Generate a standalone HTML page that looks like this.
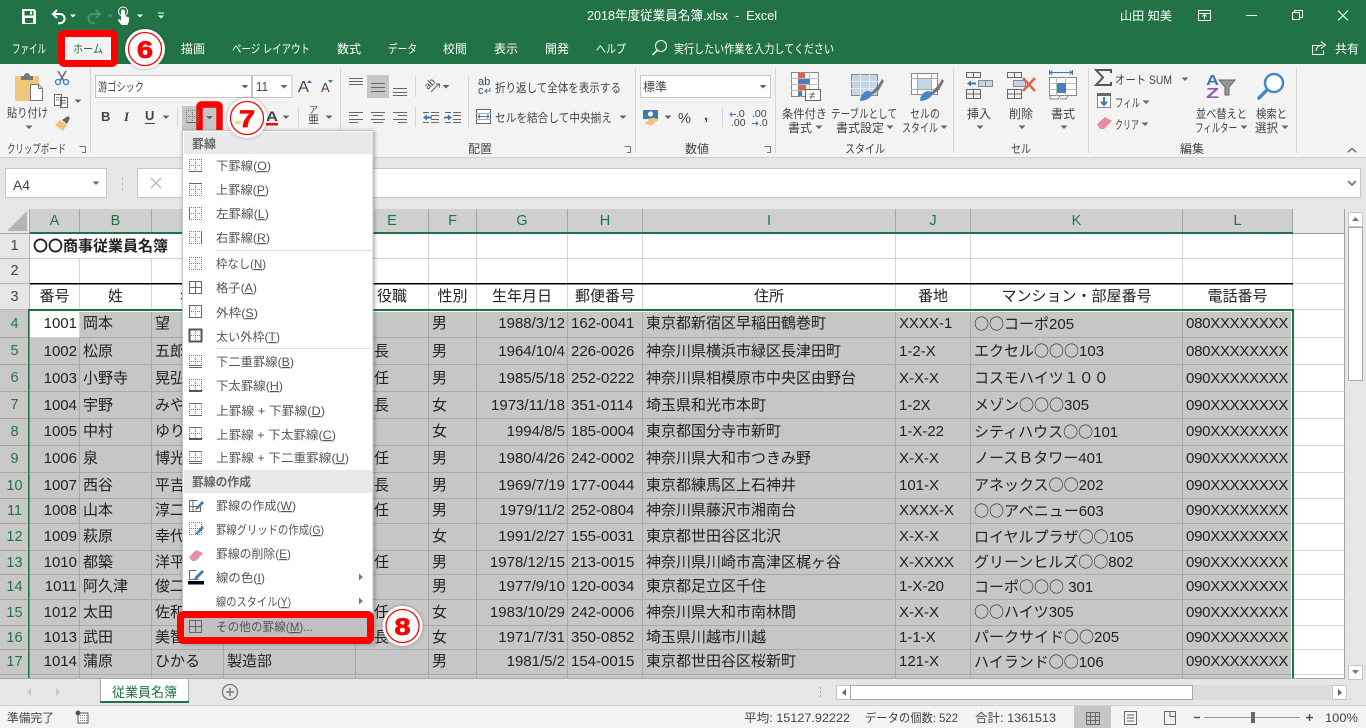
<!DOCTYPE html>
<html lang="ja"><head><meta charset="utf-8"><title>Excel</title>
<style>
html,body{margin:0;padding:0;background:#e6e6e6}
body{width:1366px;height:728px;overflow:hidden;position:relative;font-family:"Liberation Sans","Noto Sans CJK JP",sans-serif}
#sheet{position:absolute;left:0;top:209px;width:1345px;height:469px;overflow:hidden;background:#fff}
table{border-collapse:separate;border-spacing:0;table-layout:fixed;width:1345px}
td,th{padding:0 0 0 3px;box-sizing:border-box;border-right:1px solid #d4d4d4;border-bottom:1px solid #d4d4d4;white-space:nowrap;overflow:hidden;font:15px/18px "Liberation Sans","Noto Sans CJK JP",sans-serif;color:#222;text-align:left;background:#fff}
th{padding:0;text-align:center;background:#e6e6e6;color:#444;font-size:14.5px;border-color:#b4b4b4;font-weight:normal}
tr.h th{background:#cfcfcf;color:#217346;border-right-color:#a4a4a4;border-bottom-color:#a4a4a4}
tr.h th.m{background:#e6e6e6;border-right:1px solid #a0a0a0;border-bottom-color:#a0a0a0}
tr.s th{background:#c8c8c8;color:#217346;border-color:#a4a4a4}
tr.s td{background:#c6c6c6;border-color:#a9a9a9}
tr.s td.w,tr td.m{background:#fff;border-color:#d4d4d4}
td.m{border-right:1px solid #a0a0a0!important}
td.r{text-align:right;padding:0 2px 0 0}
td.c{text-align:center;padding:0}
td.k{font-weight:bold}
tr.s td:nth-child(13){letter-spacing:-.27px}
tr:nth-child(n+4):nth-child(-n+8) td{padding-top:1.5px}
i{font-style:normal;font-family:"Noto Sans CJK JP",sans-serif}
svg{position:absolute;left:0;top:0}
svg text{font-family:"Liberation Sans","Noto Sans CJK JP",sans-serif;font-size:12px;fill:#444}
text.w{fill:#fff}
text.m{fill:#555}
text.b{font-weight:bold;fill:#666}
.u{text-decoration:underline}
.s{stroke:#666;fill:none}
.n{font-family:"Liberation Sans",sans-serif!important;font-weight:bold;fill:#f00!important;stroke:#f00;stroke-width:.8}
</style></head><body>
<div id="sheet"><table>
<colgroup><col style="width:30px"><col style="width:50px"><col style="width:72px"><col style="width:72px"><col style="width:132px"><col style="width:73px"><col style="width:48px"><col style="width:91px"><col style="width:75px"><col style="width:253px"><col style="width:75px"><col style="width:212px"><col style="width:110px"><col style="width:52px"></colgroup>
<tr class="h" style="height:25px"><th style="background:#e6e6e6"></th><th>A</th><th>B</th><th>C</th><th>D</th><th>E</th><th>F</th><th>G</th><th>H</th><th>I</th><th>J</th><th>K</th><th>L</th><th class="m"></th></tr>
<tr style="height:25px"><th>1</th><td class="k" colspan="4"><i>〇〇</i>商事従業員名簿</td><td></td><td></td><td></td><td></td><td></td><td></td><td></td><td></td><td class="m"></td></tr>
<tr style="height:25px"><th>2</th><td></td><td></td><td></td><td></td><td></td><td></td><td></td><td></td><td></td><td></td><td></td><td></td><td class="m"></td></tr>
<tr style="height:26px"><th>3</th><td class="c">番号</td><td class="c">姓</td><td class="c">名</td><td class="c">部署</td><td class="c">役職</td><td class="c">性別</td><td class="c">生年月日</td><td class="c">郵便番号</td><td class="c">住所</td><td class="c">番地</td><td class="c">マンション・部屋番号</td><td class="c">電話番号</td><td class="m"></td></tr>
<tr class="s" style="height:28px"><th>4</th><td class="r w">1001</td><td>岡本</td><td>望</td><td></td><td></td><td>男</td><td class="r">1988/3/12</td><td>162-0041</td><td>東京都新宿区早稲田鶴巻町</td><td>XXXX-1</td><td><i>○○</i>コーポ205</td><td>080XXXXXXXX</td><td class="m"></td></tr>
<tr class="s" style="height:27px"><th>5</th><td class="r">1002</td><td>松原</td><td>五郎</td><td></td><td>部長</td><td>男</td><td class="r">1964/10/4</td><td>226-0026</td><td>神奈川県横浜市緑区長津田町</td><td>1-2-X</td><td>エクセル<i>○○○</i>103</td><td>080XXXXXXXX</td><td class="m"></td></tr>
<tr class="s" style="height:27px"><th>6</th><td class="r">1003</td><td>小野寺</td><td>晃弘</td><td></td><td>主任</td><td>男</td><td class="r">1985/5/18</td><td>252-0222</td><td>神奈川県相模原市中央区由野台</td><td>X-X-X</td><td>コスモハイツ１００</td><td>090XXXXXXXX</td><td class="m"></td></tr>
<tr class="s" style="height:27px"><th>7</th><td class="r">1004</td><td>宇野</td><td>みや</td><td></td><td>係長</td><td>女</td><td class="r">1973/11/18</td><td>351-0114</td><td>埼玉県和光市本町</td><td>1-2X</td><td>メゾン<i>○○○</i>305</td><td>090XXXXXXXX</td><td class="m"></td></tr>
<tr class="s" style="height:27px"><th>8</th><td class="r">1005</td><td>中村</td><td>ゆり</td><td></td><td></td><td>女</td><td class="r">1994/8/5</td><td>185-0004</td><td>東京都国分寺市新町</td><td>1-X-22</td><td>シティハウス<i>○○</i>101</td><td>090XXXXXXXX</td><td class="m"></td></tr>
<tr class="s" style="height:27px"><th>9</th><td class="r">1006</td><td>泉</td><td>博光</td><td></td><td>主任</td><td>男</td><td class="r">1980/4/26</td><td>242-0002</td><td>神奈川県大和市つきみ野</td><td>X-X-X</td><td>ノースＢタワー401</td><td>090XXXXXXXX</td><td class="m"></td></tr>
<tr class="s" style="height:26px"><th>10</th><td class="r">1007</td><td>西谷</td><td>平吉</td><td></td><td>課長</td><td>男</td><td class="r">1969/7/19</td><td>177-0044</td><td>東京都練馬区上石神井</td><td>101-X</td><td>アネックス<i>○○</i>202</td><td>090XXXXXXXX</td><td class="m"></td></tr>
<tr class="s" style="height:25px"><th>11</th><td class="r">1008</td><td>山本</td><td>淳二</td><td></td><td>主任</td><td>男</td><td class="r">1979/11/2</td><td>252-0804</td><td>神奈川県藤沢市湘南台</td><td>XXXX-X</td><td><i>○○</i>アベニュー603</td><td>090XXXXXXXX</td><td class="m"></td></tr>
<tr class="s" style="height:27px"><th>12</th><td class="r">1009</td><td>萩原</td><td>幸代</td><td></td><td></td><td>女</td><td class="r">1991/2/27</td><td>155-0031</td><td>東京都世田谷区北沢</td><td>X-X-X</td><td>ロイヤルプラザ<i>○○</i>105</td><td>090XXXXXXXX</td><td class="m"></td></tr>
<tr class="s" style="height:24px"><th>13</th><td class="r">1010</td><td>都築</td><td>洋平</td><td></td><td>主任</td><td>男</td><td class="r">1978/12/15</td><td>213-0015</td><td>神奈川県川崎市高津区梶ヶ谷</td><td>X-XXXX</td><td>グリーンヒルズ<i>○○</i>802</td><td>090XXXXXXXX</td><td class="m"></td></tr>
<tr class="s" style="height:25px"><th>14</th><td class="r">1011</td><td>阿久津</td><td>俊二</td><td></td><td></td><td>男</td><td class="r">1977/9/10</td><td>120-0034</td><td>東京都足立区千住</td><td>1-X-20</td><td>コーポ<i>○○○</i> 301</td><td>090XXXXXXXX</td><td class="m"></td></tr>
<tr class="s" style="height:26px"><th>15</th><td class="r">1012</td><td>太田</td><td>佐和</td><td></td><td>主任</td><td>女</td><td class="r">1983/10/29</td><td>242-0006</td><td>神奈川県大和市南林間</td><td>X-X-X</td><td><i>○○</i>ハイツ305</td><td>090XXXXXXXX</td><td class="m"></td></tr>
<tr class="s" style="height:24px"><th>16</th><td class="r">1013</td><td>武田</td><td>美智</td><td></td><td>課長</td><td>女</td><td class="r">1971/7/31</td><td>350-0852</td><td>埼玉県川越市川越</td><td>1-1-X</td><td>パークサイド<i>○○</i>205</td><td>090XXXXXXXX</td><td class="m"></td></tr>
<tr class="s" style="height:25px"><th>17</th><td class="r">1014</td><td>蒲原</td><td>ひかる</td><td>製造部</td><td></td><td>男</td><td class="r">1981/5/2</td><td>154-0015</td><td>東京都世田谷区桜新町</td><td>121-X</td><td>ハイランド<i>○○</i>106</td><td>090XXXXXXXX</td><td class="m"></td></tr>
<tr class="s" style="height:25px"><th></th><td></td><td></td><td></td><td></td><td></td><td></td><td></td><td></td><td></td><td></td><td></td><td></td><td class="m"></td></tr>
</table></div>

<svg width="1366" height="728" viewBox="0 0 1366 728" xmlns="http://www.w3.org/2000/svg">
<defs>
<path id="d" d="M-3.5-1.5h7L0 2z" fill="#666"/>
<path id="dw" d="M-3-1.5h6L0 1.5z" fill="#fff"/>
<g id="g" fill="none" stroke="#777" stroke-dasharray="1 1"><path d="M.5 0v13M6.5 0v13M12.5 0v13M0 .5h13M0 6.5h13M0 12.5h13"/></g>
<g id="lc" fill="none" stroke="#777"><path d="M.5.5h6v6M3 6.5h3.5V3" /></g>
<filter id="sh" x="-10%" y="-10%" width="120%" height="120%"><feDropShadow dx="1" dy="1" stdDeviation="2" flood-color="#000" flood-opacity=".35"/></filter>
<filter id="sc" x="-20%" y="-20%" width="140%" height="140%"><feDropShadow dx="0" dy="0" stdDeviation="1.5" flood-color="#000" flood-opacity=".35"/></filter>
</defs>

<!-- backgrounds -->
<rect width="1366" height="64" fill="#217346"/>
<rect y="64" width="1366" height="93" fill="#f3f3f3"/>
<rect y="157" width="1366" height="1" fill="#d0d0d0"/>
<rect y="158" width="1366" height="51" fill="#e6e6e6"/>
<rect y="678" width="1366" height="28" fill="#e6e6e6"/>
<rect y="678" width="1345" height="1" fill="#a8a8a8"/>
<rect y="705" width="1366" height="1" fill="#d0d0d0"/>
<rect y="706" width="1366" height="22" fill="#f3f3f3"/>

<!-- QAT -->
<path d="M22 9h12l2 2v13H22zM24.500 11v4.500h9V11zM25 18v5h8v-5zM30 11.500h2v3h-2z" fill="#fff" fill-rule="evenodd"/>
<g fill="none" stroke="#fff" stroke-width="2"><path d="M53 14h7a4.600 4.600 0 0 1 0 9.200h-2M57 10l-4 4 4 4"/></g>
<use href="#dw" x="73" y="16"/>
<g fill="none" stroke="#4f9070" stroke-width="2"><path d="M100 14h-7a4.600 4.600 0 0 0 0 9.200h2M96 10l4 4-4 4"/></g>
<path d="M107 14.500h6l-3 3z" fill="#4f9070"/>
<g fill="#fff"><path d="M121 16V11.500a2 2 0 0 1 4 0V16l4 1.500v3.500l-1.500 4h-6L118 20.500l1-1.500 2 1.500z"/></g>
<circle cx="123" cy="11.500" r="4.500" fill="none" stroke="#fff"/>
<use href="#dw" x="140" y="16"/>
<path d="M158 13h6" stroke="#fff"/><use href="#dw" x="161" y="17"/>

<!-- title bar -->
<text class="w" x="587" y="20" style="font-size:13px" textLength="190" lengthAdjust="spacingAndGlyphs">2018年度従業員名簿.xlsx&#160;&#160;-&#160;&#160;Excel</text>
<text class="w" x="1120" y="20" textLength="52" lengthAdjust="spacingAndGlyphs">山田&#160;知美</text>
<g fill="none" stroke="#fff"><rect x="1198.500" y="10.500" width="12" height="10"/><path d="M1198 13.500h13M1204.500 19v-4M1202.500 16.500l2-2 2 2"/></g>
<path d="M1246 15.500h11" stroke="#fff"/>
<g fill="none" stroke="#fff"><rect x="1292.500" y="12.500" width="7" height="7"/><path d="M1294.500 12.500v-2h8v7h-2.500"/></g>
<path d="M1338 10.500l10 10M1348 10.500l-10 10" stroke="#fff" fill="none"/>

<!-- tabs -->
<text class="w" x="12" y="53" textLength="34" lengthAdjust="spacingAndGlyphs">ファイル</text>
<rect x="61.500" y="33.500" width="53" height="30" rx="3" fill="#f3f3f3" stroke="#f00" stroke-width="7"/>
<text x="73" y="53" style="fill:#217346" textLength="30" lengthAdjust="spacingAndGlyphs">ホーム</text>
<text class="w" x="181" y="53" textLength="24" lengthAdjust="spacingAndGlyphs">描画</text>
<text class="w" x="232" y="53" textLength="78" lengthAdjust="spacingAndGlyphs">ページ レイアウト</text>
<text class="w" x="337" y="53" textLength="24" lengthAdjust="spacingAndGlyphs">数式</text>
<text class="w" x="388" y="53" textLength="29" lengthAdjust="spacingAndGlyphs">データ</text>
<text class="w" x="443" y="53" textLength="24" lengthAdjust="spacingAndGlyphs">校閲</text>
<text class="w" x="494" y="53" textLength="24" lengthAdjust="spacingAndGlyphs">表示</text>
<text class="w" x="545" y="53" textLength="24" lengthAdjust="spacingAndGlyphs">開発</text>
<text class="w" x="596" y="53" textLength="30" lengthAdjust="spacingAndGlyphs">ヘルプ</text>
<g fill="none" stroke="#fff"><circle cx="661" cy="46" r="5.500"/><path d="M657 50.500l-4.500 4.500" stroke-width="1.500"/></g>
<text class="w" x="674" y="53" textLength="160" lengthAdjust="spacingAndGlyphs">実行したい作業を入力してください</text>
<g fill="none" stroke="#fff"><path d="M1319 45.500h-6.500v9h11v-4M1316 51c.5-4 3-6 7-6M1321 41.500l4.500 3.500-4.500 3.500"/></g>
<text class="w" x="1335" y="53" textLength="24" lengthAdjust="spacingAndGlyphs">共有</text>

<!-- group separators -->
<g fill="#d6d6d6"><rect x="90" y="68" width="1" height="85"/><rect x="340" y="68" width="1" height="85"/><rect x="635" y="68" width="1" height="85"/><rect x="775" y="68" width="1" height="85"/><rect x="953" y="68" width="1" height="85"/><rect x="1088" y="68" width="1" height="85"/><rect x="1296" y="68" width="1" height="85"/>
<rect x="177" y="107" width="1" height="20"/><rect x="298" y="107" width="1" height="20"/><rect x="415" y="76" width="1" height="21"/><rect x="415" y="107" width="1" height="20"/><rect x="468" y="76" width="1" height="52"/><rect x="722" y="107" width="1" height="20"/></g>

<!-- clipboard -->
<rect x="15" y="76" width="24" height="25" rx="1" fill="#f0c67f"/>
<path d="M21 76h3a3 3 0 0 1 6 0h3v4H21z" fill="#777"/>
<path d="M30.500 84.500h8l4 4v12h-12z" fill="#fff" stroke="#777"/><path d="M38.500 84.500v4h4" fill="none" stroke="#777"/>
<text x="7" y="117" textLength="41" lengthAdjust="spacingAndGlyphs">貼り付け</text>
<use href="#d" x="29" y="127"/>
<path d="M58 71l6 10M66 71l-6 10" stroke="#666" stroke-width="1.500" fill="none"/>
<circle cx="58" cy="82" r="2.500" fill="none" stroke="#3d7ab5" stroke-width="1.300"/><circle cx="66" cy="82" r="2.500" fill="none" stroke="#3d7ab5" stroke-width="1.300"/>
<path d="M54.500 94.500h7v11h-7zM60.500 97.500h7v10h-7z" fill="#fff" stroke="#666"/><path d="M62 100.500h4M62 103h4" stroke="#3d7ab5"/><path d="M56 97.500h3M56 100h3" stroke="#888"/>
<use href="#d" x="78" y="101"/>
<path d="M55 125l5-5 7 5-4 6z" fill="#efc27c"/><path d="M62 120l6-4 2 2-3 6z" fill="#666"/>
<text x="7" y="153" textLength="59" lengthAdjust="spacingAndGlyphs">クリップボード</text>
<use href="#lc" x="79" y="146"/>

<!-- font -->
<rect x="95.500" y="75.500" width="156" height="22" fill="#fff" stroke="#c6c6c6"/>
<rect x="252.500" y="75.500" width="39.500" height="22" fill="#fff" stroke="#c6c6c6"/>
<text x="98" y="91" textLength="46" lengthAdjust="spacingAndGlyphs">游ゴシック</text>
<text x="256" y="91" textLength="12" lengthAdjust="spacingAndGlyphs" style="font-size:13px">11</text>
<use href="#d" x="245" y="86.500"/><use href="#d" x="284" y="86.500"/>
<text x="298" y="92" style="font-size:16px" textLength="11" lengthAdjust="spacingAndGlyphs">A</text><path d="M307 83h5l-2.500-3z" fill="#3d7ab5"/>
<text x="321" y="92" style="font-size:13px">A</text><path d="M328 80h5l-2.500 3z" fill="#3d7ab5"/>
<text x="101" y="121" style="font-size:13px;font-weight:bold">B</text>
<text x="124" y="121" style="font-size:13px;font-style:italic;font-weight:bold;font-family:'Liberation Serif',serif">I</text>
<text x="145" y="120" style="font-size:13px;font-weight:bold">U</text><path d="M145 123.500h10" stroke="#444"/>
<use href="#d" x="166" y="117"/>
<rect x="182" y="106" width="15" height="24" fill="#c6c6c6"/>
<rect x="199.500" y="104.500" width="20" height="29" rx="2" fill="#c6c6c6" stroke="#f00" stroke-width="6.500"/>
<g transform="translate(186,110)"><use href="#g"/><path class="s" d="M0 12.500h13"/></g>
<use href="#d" x="209.500" y="117.500"/>
<text x="266" y="121" style="font-size:14px;font-weight:bold" textLength="12" lengthAdjust="spacingAndGlyphs">A</text>
<rect x="266" y="123" width="12" height="2.500" fill="#f00"/>
<use href="#d" x="286" y="117"/>
<text x="309" y="113" style="font-size:9px">ア</text><text x="308" y="123" style="font-size:11px">亜</text>
<use href="#d" x="329" y="117"/>

<!-- align -->
<rect x="367" y="75" width="22" height="23" fill="#c6c6c6"/>
<path d="M349 78.500h14M349 81.500h14M349 84.500h14M371 83.500h14M371 87.500h14M371 91.500h14M393 88.500h14M393 92.500h14M393 95.500h14M349 112.500h14M349 115.500h9M349 119.500h14M349 122.500h9M371 112.500h14M373 115.500h10M371 119.500h14M373 122.500h10M393 112.500h14M398 115.500h9M393 119.500h14M398 122.500h9" stroke="#666" fill="none"/>
<text x="0" y="0" transform="translate(428,90) rotate(-45)" style="font-size:10px">ab</text>
<path d="M431 92l8-8M436 84h3.500v3.500" stroke="#666" fill="none"/>
<use href="#d" x="446" y="86.500"/>
<path d="M431 112.500h8M431 115.500h8M431 119.500h8M431 122.500h8M423 112.500h6M423 122.500h6" stroke="#666" fill="none"/>
<path d="M423 117.500l4-3v2h5v2h-5v2z" fill="#3d7ab5"/>
<path d="M453 112.500h8M453 115.500h8M453 119.500h8M453 122.500h8M445 112.500h6M445 122.500h6" stroke="#666" fill="none"/>
<path d="M452 117.500l-4-3v2h-4v2h4v2z" fill="#3d7ab5"/>
<text x="478" y="85" style="font-size:11px">ab</text><text x="478" y="94" style="font-size:11px">c</text>
<path d="M490 88v3h-5M487 89l-2 2 2 2" stroke="#3d7ab5" fill="none"/>
<text x="495" y="92" textLength="126" lengthAdjust="spacingAndGlyphs">折り返して全体を表示する</text>
<rect x="476.500" y="109.500" width="14" height="14" fill="#fff" stroke="#666"/><path d="M476 113.500h15M476 119.500h15" stroke="#aaa"/><path d="M478 116.500h11M480 114.500l-2 2 2 2M487 114.500l2 2-2 2" stroke="#3d7ab5" fill="none"/>
<text x="495" y="122" textLength="117" lengthAdjust="spacingAndGlyphs">セルを結合して中央揃え</text>
<use href="#d" x="623" y="117"/>
<text x="468" y="153" textLength="24" lengthAdjust="spacingAndGlyphs">配置</text>
<use href="#lc" x="624" y="146"/>

<!-- number -->
<rect x="640.500" y="75.500" width="130" height="22" fill="#fff" stroke="#c6c6c6"/>
<text x="643" y="91" textLength="24" lengthAdjust="spacingAndGlyphs">標準</text>
<use href="#d" x="763" y="86.500"/>
<rect x="643" y="110" width="15" height="9" fill="#3d7ab5"/><circle cx="650.500" cy="114" r="2.500" fill="#fff"/>
<ellipse cx="653" cy="120" rx="5" ry="2" fill="#efc27c"/><ellipse cx="650" cy="123" rx="5" ry="2" fill="#efc27c"/>
<use href="#d" x="668" y="117"/>
<text x="678" y="123" style="font-size:15px" textLength="13" lengthAdjust="spacingAndGlyphs">%</text>
<text x="704" y="120" style="font-size:15px;font-weight:bold">,</text>
<text x="736" y="117" style="font-size:10.500px">.0</text><text x="731" y="126" style="font-size:10.500px">.00</text><path d="M730 114.500h6M732 112.500l-2 2 2 2" stroke="#3d7ab5" fill="none"/>
<text x="752" y="117" style="font-size:10.500px">.00</text><text x="759" y="126" style="font-size:10.500px">.0</text><path d="M752 123.500h6M756 121.500l2 2-2 2" stroke="#3d7ab5" fill="none"/>
<text x="685" y="153" textLength="24" lengthAdjust="spacingAndGlyphs">数値</text>
<use href="#lc" x="764" y="146"/>

<!-- styles -->
<rect x="791.500" y="72.500" width="27" height="24" fill="#fff" stroke="#888"/>
<path d="M800.500 72v25M809.500 72v25M791 78.500h28M791 84.500h28M791 90.500h28" stroke="#bbb"/>
<rect x="798" y="73" width="7" height="5" fill="#d9654a"/><rect x="798" y="79" width="12" height="5" fill="#4a7ebb"/><rect x="798" y="85" width="8" height="5" fill="#d9654a"/><rect x="798" y="91" width="4" height="5" fill="#4a7ebb"/>
<rect x="805.500" y="89.500" width="15" height="11" fill="#fff" stroke="#666"/><text x="809" y="99" style="font-size:11px">≠</text>
<text x="782" y="118" textLength="45" lengthAdjust="spacingAndGlyphs">条件付き</text>
<text x="788" y="132" textLength="24" lengthAdjust="spacingAndGlyphs">書式</text><use href="#d" x="819" y="127"/>

<rect x="851.500" y="74.500" width="26" height="21" fill="#c5d5e9" stroke="#888"/><path d="M860.500 74v22M869.500 74v22M851 81.500h27M851 88.500h27" stroke="#eaeef4"/>
<path d="M871 93l8-9 3-5 2 2-5 9-7 5z" fill="#777"/><path d="M860 101c0-5 4-10 8-10 3 0 5 2 4 4-2 4-8 6-12 6z" fill="#4a86c5"/>
<text x="831" y="118" textLength="66" lengthAdjust="spacingAndGlyphs">テーブルとして</text>
<text x="836" y="132" textLength="48" lengthAdjust="spacingAndGlyphs">書式設定</text><use href="#d" x="890" y="127"/>

<rect x="911.500" y="73.500" width="26" height="21" fill="#fff" stroke="#888"/><rect x="917" y="79" width="15" height="11" fill="#c5d5e9"/><path d="M917.500 73v22M931.500 73v22M911 78.500h27M911 89.500h27" stroke="#aaa"/>
<path d="M931 93l8-9 3-5 2 2-5 9-7 5z" fill="#777"/><path d="M920 101c0-5 4-10 8-10 3 0 5 2 4 4-2 4-8 6-12 6z" fill="#4a86c5"/>
<text x="910" y="118" textLength="30" lengthAdjust="spacingAndGlyphs">セルの</text>
<text x="902" y="132" textLength="36" lengthAdjust="spacingAndGlyphs">スタイル</text><use href="#d" x="944" y="127"/>
<text x="845" y="153" textLength="40" lengthAdjust="spacingAndGlyphs">スタイル</text>

<!-- cells -->
<path d="M966.500 72.500h14v5h-14zM973.500 72v6M966.500 89.500h14v9h-14zM973.500 89v10M966 94h15" fill="none" stroke="#666"/>
<rect x="978.500" y="80.500" width="14" height="6" fill="#c5d5e9" stroke="#888"/><path d="M985.500 80v7" stroke="#888"/>
<path d="M967 83.500l4-3v2h5v2h-5v2z" fill="#3d7ab5"/>
<text x="967" y="118" textLength="24" lengthAdjust="spacingAndGlyphs">挿入</text><use href="#d" x="980" y="127"/>
<path d="M1007.500 72.500h14v5h-14zM1014.500 72v6M1007.500 89.500h14v9h-14zM1014.500 89v10M1007 94h15" fill="none" stroke="#666"/>
<rect x="1013.500" y="80.500" width="12" height="6" fill="#c5d5e9" stroke="#888"/>
<path d="M1023 78l12 13M1035 78l-12 13" stroke="#d9654a" stroke-width="2.500" fill="none"/>
<text x="1009" y="118" textLength="24" lengthAdjust="spacingAndGlyphs">削除</text><use href="#d" x="1022" y="127"/>
<path d="M1049.500 70v5M1072.500 70v5M1050 72.500h22M1052.500 70.500l-2.500 2 2.500 2M1069.500 70.500l2.500 2-2.500 2" stroke="#3d7ab5" fill="none"/>
<rect x="1049.500" y="77.500" width="27" height="18" fill="#fff" stroke="#888"/><path d="M1056.500 77v19M1065.500 77v19M1049 83.500h28M1049 89.500h28" stroke="#bbb"/>
<rect x="1057" y="83" width="9" height="10" fill="#4a7ebb"/>
<path d="M1050 96v3h8l2-3M1060 99h6l2-3" fill="none" stroke="#888"/>
<text x="1051" y="118" textLength="24" lengthAdjust="spacingAndGlyphs">書式</text><use href="#d" x="1064" y="127"/>
<text x="1011" y="153" textLength="20" lengthAdjust="spacingAndGlyphs">セル</text>

<!-- editing -->
<path d="M1111 73v-3h-15l7 7.500-7 7.500h15v-3" fill="none" stroke="#555" stroke-width="2"/>
<text x="1115" y="84" textLength="57" lengthAdjust="spacingAndGlyphs">オート SUM</text><use href="#d" x="1185" y="79"/>
<rect x="1097.500" y="93.500" width="13" height="14" fill="#fff" stroke="#888"/><rect x="1097" y="93" width="14" height="3" fill="#666"/>
<path d="M1104 97v7M1101 101.500l3 3.500 3-3.500" stroke="#3d7ab5" stroke-width="2" fill="none"/>
<text x="1115" y="107" textLength="25" lengthAdjust="spacingAndGlyphs">フィル</text><use href="#d" x="1146" y="102"/>
<path d="M1097 124l8-7 7 4-8 8h-4z" fill="#e88ea0"/>
<text x="1115" y="129" textLength="24" lengthAdjust="spacingAndGlyphs">クリア</text><use href="#d" x="1145" y="124"/>
<text x="1206" y="85" style="font-size:15px;font-weight:bold;fill:#3d7ab5" textLength="13" lengthAdjust="spacingAndGlyphs">A</text>
<text x="1206" y="98" style="font-size:15px;font-weight:bold;fill:#8e5fb0" textLength="13" lengthAdjust="spacingAndGlyphs">Z</text>
<path d="M1219 80h16l-6 7v8h-4v-8z" fill="#999" stroke="#666"/>
<text x="1196" y="118" textLength="51" lengthAdjust="spacingAndGlyphs">並べ替えと</text>
<text x="1195" y="132" textLength="42" lengthAdjust="spacingAndGlyphs">フィルター</text><use href="#d" x="1244" y="127"/>
<circle cx="1274" cy="83" r="9" fill="#fff" stroke="#4a86c5" stroke-width="2.500"/><path d="M1267 90l-8 8" stroke="#4a86c5" stroke-width="3.500" stroke-linecap="round"/>
<text x="1256" y="118" textLength="31" lengthAdjust="spacingAndGlyphs">検索と</text>
<text x="1255" y="132" textLength="23" lengthAdjust="spacingAndGlyphs">選択</text><use href="#d" x="1285" y="127"/>
<text x="1180" y="153" textLength="24" lengthAdjust="spacingAndGlyphs">編集</text>
<path d="M1348 152l4-3.500 4 3.500" fill="none" stroke="#777" stroke-width="1.500"/>

<!-- formula bar -->
<rect x="5.500" y="168.500" width="101" height="29" fill="#fff" stroke="#c6c6c6"/>
<text x="13" y="190" style="font-size:14px" textLength="17" lengthAdjust="spacingAndGlyphs">A4</text>
<use href="#d" x="96" y="183"/>
<path d="M122.500 178v2M122.500 183v2M122.500 188v2" stroke="#aaa"/>
<rect x="137.500" y="168.500" width="1223" height="29" fill="#fff" stroke="#c6c6c6"/>
<path d="M151 178l10 10M161 178l-10 10" stroke="#bbb" stroke-width="1.500" fill="none"/>
<path d="M1348 181l4 4 4-4" fill="none" stroke="#777" stroke-width="1.800"/>

<!-- sheet overlays -->
<path d="M27 211l0 20-20 0z" fill="#b4b4b4"/>
<rect x="30" y="232" width="1263" height="2" fill="#217346"/>
<rect x="30" y="283" width="1263" height="1.500" fill="#000"/>
<rect x="29" y="311" width="1" height="367" fill="#fff"/>
<rect x="30" y="311" width="1263" height="1" fill="#fff"/>
<rect x="1291" y="311" width="1" height="367" fill="#fff"/>
<rect x="28" y="309" width="1266" height="2" fill="#217346"/>
<rect x="28" y="309" width="1.700" height="369" fill="#217346"/>
<rect x="1292" y="309" width="2" height="369" fill="#217346"/>

<!-- vertical scrollbar -->
<rect x="1348.500" y="212.500" width="14" height="14" fill="#fff" stroke="#c6c6c6"/><path d="M1352 221h7l-3.500-4z" fill="#777"/>
<rect x="1348.500" y="227.500" width="14" height="153" fill="#fff" stroke="#ababab"/>
<rect x="1348.500" y="665.500" width="14" height="14" fill="#fff" stroke="#c6c6c6"/><path d="M1352 670h7l-3.500 4z" fill="#777"/>

<!-- sheet tab bar -->
<rect x="100.500" y="678.500" width="88" height="24" fill="#fff" stroke="#a8a8a8"/>
<rect x="100" y="701" width="89" height="2" fill="#217346"/>
<text x="112" y="697" style="fill:#217346;font-size:13.500px" textLength="65" lengthAdjust="spacingAndGlyphs">従業員名簿</text>
<path d="M31 688v8l-4-4zM56 688v8l4-4z" fill="#c6c6c6"/>
<circle cx="230" cy="692" r="7.500" fill="none" stroke="#777" stroke-width="1.300"/><path d="M226 692h8M230 688v8" stroke="#777" stroke-width="1.500"/>
<path d="M820.500 687v2M820.500 691v2M820.500 695v2" stroke="#aaa"/>
<rect x="851" y="685" width="480" height="15" fill="#dcdcdc"/>
<rect x="836.500" y="685.500" width="14" height="14" fill="#fff" stroke="#c6c6c6"/><path d="M846 689v7l-4-3.500z" fill="#666"/>
<rect x="850.500" y="685.500" width="342" height="14" fill="#fff" stroke="#ababab"/>
<rect x="1332.500" y="685.500" width="14" height="14" fill="#fff" stroke="#c6c6c6"/><path d="M1338 689v7l4-3.500z" fill="#666"/>

<!-- status -->
<text x="7" y="722" textLength="47" lengthAdjust="spacingAndGlyphs">準備完了</text>
<rect x="78" y="713" width="10" height="10" fill="#fff" stroke="#555"/><circle cx="78" cy="713" r="2.500" fill="#555"/><path d="M80 715.500h7M80 718h7M80 720.500h7" stroke="#777" stroke-dasharray="1 1"/>
<text x="744" y="722" textLength="106" lengthAdjust="spacingAndGlyphs">平均: 15127.92222</text>
<text x="865" y="722" textLength="93" lengthAdjust="spacingAndGlyphs">データの個数: 522</text>
<text x="975" y="722" textLength="81" lengthAdjust="spacingAndGlyphs">合計: 1361513</text>
<rect x="1074" y="706" width="37" height="22" fill="#c6c6c6"/>
<g fill="none" stroke="#666"><path d="M1086.500 712.500h13v12h-13zM1086 716.500h14M1086 720.500h14M1090.500 712v13M1095.500 712v13"/>
<path d="M1124.500 711.500h12v13h-12zM1127 715h7M1127 718h7M1127 721h7"/>
<path d="M1164.500 711.500h11v13h-11zM1170 711v5.500h5.500"/></g>
<path d="M1194 717.500h6" stroke="#555" stroke-width="1.500"/>
<rect x="1204" y="717" width="96" height="1" fill="#999"/>
<rect x="1251" y="712" width="4" height="11" fill="#666"/>
<path d="M1306 717.500h7M1309.500 714v7" stroke="#555" stroke-width="1.500"/>
<text x="1325" y="722" textLength="33" lengthAdjust="spacingAndGlyphs">100%</text>

<!-- menu -->
<rect x="182.500" y="130.500" width="190.500" height="512" fill="#fff" stroke="#c6c6c6" filter="url(#sh)"/>
<rect x="184" y="132" width="188" height="22" fill="#e9e9e9"/>
<rect x="184" y="470" width="188" height="23" fill="#e9e9e9"/>
<rect x="216" y="250" width="156" height="1" fill="#e2e2e2"/>
<rect x="216" y="348" width="156" height="1" fill="#e2e2e2"/>
<text class="b" x="192" y="148" textLength="24" lengthAdjust="spacingAndGlyphs">罫線</text>
<text class="b" x="192" y="486" textLength="59" lengthAdjust="spacingAndGlyphs">罫線の作成</text>

<g transform="translate(189,159)"><use href="#g"/><path class="s" d="M0 12.500h13"/></g>
<text class="m" x="216" y="170" textLength="55" lengthAdjust="spacingAndGlyphs">下罫線(<tspan class="u">O</tspan>)</text>
<g transform="translate(189,183)"><use href="#g"/><path class="s" d="M0 .5h13"/></g>
<text class="m" x="216" y="194" textLength="53" lengthAdjust="spacingAndGlyphs">上罫線(<tspan class="u">P</tspan>)</text>
<g transform="translate(189,207)"><use href="#g"/><path class="s" d="M.5 0v13"/></g>
<text class="m" x="216" y="218" textLength="53" lengthAdjust="spacingAndGlyphs">左罫線(<tspan class="u">L</tspan>)</text>
<g transform="translate(189,231)"><use href="#g"/><path class="s" d="M12.500 0v13"/></g>
<text class="m" x="216" y="242" textLength="54" lengthAdjust="spacingAndGlyphs">右罫線(<tspan class="u">R</tspan>)</text>
<g transform="translate(189,257)"><use href="#g"/></g>
<text class="m" x="216" y="268" textLength="50" lengthAdjust="spacingAndGlyphs">枠なし(<tspan class="u">N</tspan>)</text>
<g transform="translate(189,281)"><path class="s" d="M.5.5h12v12H.5zM6.500 0v13M0 6.500h13"/></g>
<text class="m" x="216" y="292" textLength="41" lengthAdjust="spacingAndGlyphs">格子(<tspan class="u">A</tspan>)</text>
<g transform="translate(189,305)"><use href="#g"/><path class="s" d="M.5.5h12v12H.5z"/></g>
<text class="m" x="216" y="317" textLength="42" lengthAdjust="spacingAndGlyphs">外枠(<tspan class="u">S</tspan>)</text>
<g transform="translate(189,329)"><use href="#g"/><path d="M.5.5h12v12H.5z" fill="none" stroke="#555" stroke-width="2"/></g>
<text class="m" x="216" y="341" textLength="64" lengthAdjust="spacingAndGlyphs">太い外枠(<tspan class="u">T</tspan>)</text>
<g transform="translate(189,355)"><use href="#g"/><path class="s" d="M0 10.500h13M0 12.500h13"/></g>
<text class="m" x="216" y="366" textLength="78" lengthAdjust="spacingAndGlyphs">下二重罫線(<tspan class="u">B</tspan>)</text>
<g transform="translate(189,379)"><use href="#g"/><path d="M0 12h13" fill="none" stroke="#555" stroke-width="2"/></g>
<text class="m" x="216" y="390" textLength="67" lengthAdjust="spacingAndGlyphs">下太罫線(<tspan class="u">H</tspan>)</text>
<g transform="translate(189,403)"><use href="#g"/><path class="s" d="M0 .5h13M0 12.500h13"/></g>
<text class="m" x="216" y="415" textLength="109" lengthAdjust="spacingAndGlyphs">上罫線 + 下罫線(<tspan class="u">D</tspan>)</text>
<g transform="translate(189,427)"><use href="#g"/><path class="s" d="M0 .5h13"/><path d="M0 12h13" fill="none" stroke="#555" stroke-width="2"/></g>
<text class="m" x="216" y="439" textLength="120" lengthAdjust="spacingAndGlyphs">上罫線 + 下太罫線(<tspan class="u">C</tspan>)</text>
<g transform="translate(189,451)"><use href="#g"/><path class="s" d="M0 .5h13M0 10.500h13M0 12.500h13"/></g>
<text class="m" x="216" y="462" textLength="133" lengthAdjust="spacingAndGlyphs">上罫線 + 下二重罫線(<tspan class="u">U</tspan>)</text>

<g transform="translate(189,498)"><path class="s" d="M.5 2.500h8M.5 2.500v11h11V8M4 3v10M0 8.500h11"/><path d="M7 10l6-7 2 2-6 6-3 1z" fill="#3d7ab5"/></g>
<text class="m" x="216" y="510" textLength="80" lengthAdjust="spacingAndGlyphs">罫線の作成(<tspan class="u">W</tspan>)</text>
<g transform="translate(189,522)"><use href="#g"/><path d="M7 11l6-7 2 2-6 6-3 1z" fill="#3d7ab5"/></g>
<text class="m" x="216" y="534" textLength="108" lengthAdjust="spacingAndGlyphs">罫線グリッドの作成(<tspan class="u">G</tspan>)</text>
<path d="M189 557l7-7 7 3-7 8h-4z" fill="#e88ea0"/>
<text class="m" x="216" y="558" textLength="75" lengthAdjust="spacingAndGlyphs">罫線の削除(<tspan class="u">E</tspan>)</text>
<g><path d="M189.500 570.500h7M189.500 570.500v9h9" class="s"/><path d="M195 577l7-7 2 2-7 7-3 1z" fill="#3d7ab5"/><rect x="188" y="581" width="16" height="3.500" fill="#000"/></g>
<text class="m" x="216" y="582" textLength="49" lengthAdjust="spacingAndGlyphs">線の色(<tspan class="u">I</tspan>)</text>
<path d="M359 573.500v7l4-3.500z" fill="#777"/>
<text class="m" x="216" y="606" textLength="75" lengthAdjust="spacingAndGlyphs">線のスタイル(<tspan class="u">Y</tspan>)</text>
<path d="M359 597.500v7l4-3.500z" fill="#777"/>

<rect x="180.500" y="614.500" width="190" height="26" rx="3" fill="#c0c0c0" stroke="#f00" stroke-width="7"/>
<path class="s" d="M189.500 620.500h12v12h-12zM195.500 620v13M189 626.500h13"/>
<text class="m" x="216" y="631" textLength="97" lengthAdjust="spacingAndGlyphs">その他の罫線(<tspan class="u">M</tspan>)...</text>

<!-- callouts -->
<circle cx="145" cy="49" r="20" fill="#fff" filter="url(#sc)"/><circle cx="145" cy="49" r="16.500" fill="#fff" stroke="#f00" stroke-width="1.300"/>
<text class="n" x="137" y="58" style="font-size:24px" textLength="16" lengthAdjust="spacingAndGlyphs">6</text>
<circle cx="247" cy="118" r="20" fill="#fff" filter="url(#sc)"/><circle cx="247" cy="118" r="16.500" fill="#fff" stroke="#f00" stroke-width="1.300"/>
<path d="M235 121h7l-2 3h-5z" fill="#e5dc3a" opacity=".8"/>
<text class="n" x="239" y="127" style="font-size:24px" textLength="16" lengthAdjust="spacingAndGlyphs">7</text>
<circle cx="402.500" cy="626" r="20" fill="#fff" filter="url(#sc)"/><circle cx="402.500" cy="626" r="16.500" fill="#fff" stroke="#f00" stroke-width="1.300"/>
<text class="n" x="394.500" y="635" style="font-size:24px" textLength="16" lengthAdjust="spacingAndGlyphs">8</text>
</svg>
</body></html>
